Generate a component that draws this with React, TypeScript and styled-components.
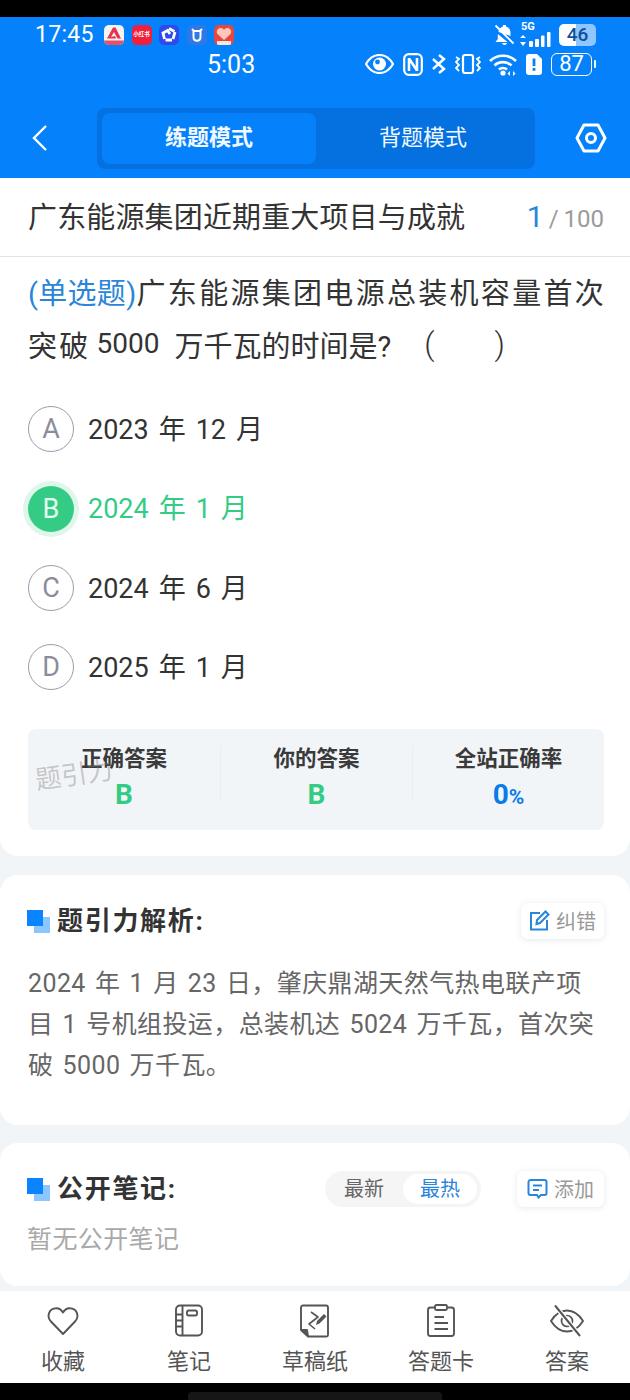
import styled, { createGlobalStyle } from 'styled-components';

const GlobalStyle = createGlobalStyle`
  * { box-sizing: border-box; }
  html, body { margin: 0; padding: 0; background: #000; }
  body { font-family: Roboto, "Noto Sans CJK SC", sans-serif; }
`;

const BLUE = '#0582fb';
const GREEN = '#34cc85';

const options = [
  { key: 'A', text: '2023 年 12 月' },
  { key: 'B', text: '2024 年 1 月', correct: true },
  { key: 'C', text: '2024 年 6 月' },
  { key: 'D', text: '2025 年 1 月' },
];

function AppIcons() {
  return (
    <AppIconRow>
      <AppIcon $bg="#f5f3f4">
        <svg width="20" height="20" viewBox="0 0 20 20">
          <path d="M3 13.5 L9 2.5 H11.5 L17 13.5 H13.5 L10 7 L7 12 L11 11 L12 13.5 Z" fill="#e8324c" />
          <rect x="0" y="15.5" width="20" height="4.5" fill="#ea4f66" />
        </svg>
      </AppIcon>
      <AppIcon $bg="#f0203c">
        <TinyText>小红书</TinyText>
      </AppIcon>
      <AppIcon $bg="#2e49ee">
        <svg width="20" height="20" viewBox="0 0 20 20" fill="none" stroke="#fff" strokeWidth="2.8">
          <path d="M10 3.5 L15.5 6.5 M16 7 L14 14 M13 15 L6.5 15 M5.5 14 L4 8 L8.5 5.5 L11 9" />
        </svg>
      </AppIcon>
      <AppIcon $bg="#2f78e6">
        <svg width="20" height="20" viewBox="0 0 20 20" fill="none" stroke="#fff" strokeWidth="2">
          <path d="M5 4 L7 6 H13 L15 4 M6.5 6 V12 C6.5 17 13.5 17 13.5 12 V6" />
        </svg>
      </AppIcon>
      <AppIcon $bg="#e8473f">
        <svg width="20" height="20" viewBox="0 0 20 20">
          <path d="M10 15 L3.5 9 C1.5 6 4 2.5 7 3 C8.5 3.2 9.5 4 10 5 C10.5 4 11.5 3.2 13 3 C16 2.5 18.5 6 16.5 9 Z" fill="#f8c9b8" />
          <rect x="3" y="16" width="14" height="4" fill="#fbe8dc" />
        </svg>
      </AppIcon>
    </AppIconRow>
  );
}

function MutedBell() {
  return (
    <svg width="21" height="22" viewBox="0 0 21 22" fill="#fff">
      <path d="M4.5 8 C4.5 5 6.5 3 9 2.4 V1 H12 V2.4 C14.5 3 16.5 5.5 16.5 9 L16.5 12 Z" />
      <path d="M3.8 10 L13.5 18 H1.5 L3.8 15 Z" />
      <path d="M8 19 H13 C12.5 21.5 8.5 21.5 8 19 Z" />
      <path d="M1.5 1.5 L19.5 19.5" stroke="#fff" strokeWidth="1.8" />
    </svg>
  );
}

function Signal() {
  return (
    <SignalWrap>
      <SignalLabel>5G</SignalLabel>
      <svg width="33" height="15" viewBox="0 0 33 15" fill="#fff">
        <path d="M3 3 L6 6 H0 Z M3 14 L0 10 H6 Z" />
        <rect x="9" y="9" width="4" height="6" rx="1" />
        <rect x="15" y="7" width="4" height="8" rx="1" />
        <rect x="21" y="3.5" width="3.5" height="11.5" rx="1" />
        <rect x="27" y="0" width="3.5" height="15" rx="1" />
      </svg>
    </SignalWrap>
  );
}

function StatusRowIcons() {
  return (
    <StatusIcons>
      <svg width="29" height="20" viewBox="0 0 29 20">
        <path d="M1 10 C5 3 10 1 14.5 1 C19 1 24 3 28 10 C24 17 19 19 14.5 19 C10 19 5 17 1 10 Z" fill="none" stroke="#fff" strokeWidth="2.2" />
        <circle cx="14.5" cy="10" r="6.5" fill="#fff" />
        <circle cx="12.5" cy="8" r="2.4" fill={BLUE} />
      </svg>
      <svg width="20" height="23" viewBox="0 0 20 23" fill="none" stroke="#fff">
        <rect x="1.2" y="1.2" width="17.6" height="20.6" rx="4.5" strokeWidth="2.2" />
        <path d="M6 5 V18 M14 5 V18 M6 5.5 L14 17.5" strokeWidth="2.6" />
      </svg>
      <svg width="15" height="22" viewBox="0 0 15 22" fill="none" stroke="#fff" strokeWidth="2.4">
        <path d="M2 6 L13 16 L8 20 M2 16 L13 6 L8 2" />
      </svg>
      <svg width="26" height="22" viewBox="0 0 26 22" fill="none" stroke="#fff" strokeWidth="2">
        <rect x="8" y="2" width="10" height="18" rx="2" strokeWidth="2.2" />
        <path d="M1 4 L4 6 L1 9 L4 12 L1 15 L4 18 M25 4 L22 6 L25 9 L22 12 L25 15 L22 18" strokeWidth="1.8" />
      </svg>
      <svg width="28" height="23" viewBox="0 0 28 23" fill="none" stroke="#fff" strokeWidth="2.6">
        <path d="M1 8 C8 1 20 1 27 8 M5.5 12.5 C10 8 18 8 22.5 12.5 M10 16.5 C12 14.5 16 14.5 18 16.5" />
        <circle cx="14" cy="20" r="2.6" fill="#fff" stroke="none" />
        <path d="M21 18 L18.5 20.5 L21 23 Z M24 18 L26.5 20.5 L24 23 Z" fill="#fff" stroke="none" />
      </svg>
      <svg width="16" height="21" viewBox="0 0 16 21">
        <path d="M3 0 H11 L16 5 V18 A3 3 0 0 1 13 21 H3 A3 3 0 0 1 0 18 V3 A3 3 0 0 1 3 0 Z" fill="#fff" />
        <rect x="6.6" y="4.5" width="2.8" height="7.5" fill={BLUE} />
        <rect x="6.6" y="14" width="2.8" height="2.8" fill={BLUE} />
      </svg>
      <BatteryOutline>
        <BatteryBox>87</BatteryBox>
        <BatteryTip />
      </BatteryOutline>
    </StatusIcons>
  );
}

function BackIcon() {
  return (
    <svg width="18" height="28" viewBox="0 0 18 28" fill="none" stroke="#fff" strokeWidth="2.4">
      <path d="M15 2 L3 14 L15 26" />
    </svg>
  );
}

function SettingsIcon() {
  return (
    <svg width="32" height="30" viewBox="0 0 32 30" fill="none" stroke="#fff" strokeWidth="3" strokeLinejoin="round">
      <path d="M9 2 H23 L30 15 L23 28 H9 L2 15 Z" />
      <circle cx="16" cy="15" r="4.5" />
    </svg>
  );
}

function EditIcon() {
  return (
    <svg width="21" height="21" viewBox="0 0 21 21" fill="none" stroke="#2a86d9" strokeWidth="2">
      <path d="M11 3 H2 V19.5 H18 V10" />
      <path d="M7.5 14 L8 10 L16.5 1.5 L19.5 4.5 L11 13 Z" />
    </svg>
  );
}

function CommentIcon() {
  return (
    <svg width="21" height="21" viewBox="0 0 21 21" fill="none" stroke="#2a86d9" strokeWidth="2">
      <path d="M3.5 2 H17.5 A2 2 0 0 1 19.5 4 V15 A2 2 0 0 1 17.5 17 H14 L11.5 19.5 L10 17 H3.5 A2 2 0 0 1 1.5 15 V4 A2 2 0 0 1 3.5 2 Z" />
      <path d="M6 7.5 H15 M6 12 H12" />
    </svg>
  );
}

function HeartIcon() {
  return (
    <svg width="34" height="34" viewBox="0 0 34 34" fill="none" stroke="#555" strokeWidth="1.9" strokeLinejoin="round">
      <path d="M17 30 L4.5 17 C0.5 12 3 4.5 10 4.2 C13 4 15.5 5.8 17 8.5 C18.5 5.8 21 4 24 4.2 C31 4.5 33.5 12 29.5 17 Z" />
    </svg>
  );
}

function NotebookIcon() {
  return (
    <svg width="34" height="34" viewBox="0 0 34 34" fill="none" stroke="#555" strokeWidth="1.9">
      <rect x="4" y="1.5" width="26" height="30" rx="4" />
      <path d="M10.5 1.5 V31.5 M4 10.5 H10.5 M4 16.5 H10.5 M4 22.5 H10.5" />
      <rect x="15" y="6.5" width="10" height="5" rx="1.8" />
    </svg>
  );
}

function DraftIcon() {
  return (
    <svg width="34" height="34" viewBox="0 0 34 34" fill="none" stroke="#555" strokeWidth="1.9" strokeLinejoin="round">
      <path d="M5 1.5 H28 A2 2 0 0 1 30 3.5 V31 A1.5 1.5 0 0 1 28.5 32.5 H10 L3 26 V3.5 A2 2 0 0 1 5 1.5 Z" />
      <path d="M3 26 H9 L10 32" fill="#555" />
      <path d="M13 8 L20 13 L11 20 L17 25" strokeWidth="1.6" />
      <path d="M18 21 L19 17 L26 10 L28.5 12.5 L21.5 19.5 Z" fill="#555" stroke="none" />
    </svg>
  );
}

function ClipboardIcon() {
  return (
    <svg width="34" height="34" viewBox="0 0 34 34" fill="none" stroke="#555" strokeWidth="1.9">
      <path d="M10.5 3.5 H6.5 A2.5 2.5 0 0 0 4 6 V29.5 A2.5 2.5 0 0 0 6.5 32 H27.5 A2.5 2.5 0 0 0 30 29.5 V6 A2.5 2.5 0 0 0 27.5 3.5 H24" />
      <rect x="11" y="1" width="12" height="5" rx="1.5" />
      <path d="M10.5 13 H20 M10.5 19 H24 M10.5 25 H24" />
    </svg>
  );
}

function EyeOffIcon() {
  return (
    <svg width="36" height="34" viewBox="0 0 36 34" fill="none" stroke="#555" strokeWidth="1.9">
      <path d="M2 17 C7 9 12 6.5 18 6.5 C24 6.5 29 9 34 17 C29 25 24 27.5 18 27.5 C12 27.5 7 25 2 17 Z" />
      <circle cx="18" cy="17" r="5.5" strokeWidth="1.7" />
      <path d="M6 1.5 L31 32" stroke="#fff" strokeWidth="4.5" />
      <path d="M6 1.5 L31 32" strokeWidth="2" />
    </svg>
  );
}

function SectionMark() {
  return (
    <Mark>
      <MarkBack />
      <MarkFront />
    </Mark>
  );
}

export default function App() {
  return (
    <Screen>
      <GlobalStyle />
      <TopBlack />
      <Header>
        <StatusTop>
          <ClockLarge>17:45</ClockLarge>
          <AppIcons />
          <TopRight>
            <MutedBell />
            <Signal />
            <BatteryFilled>46</BatteryFilled>
          </TopRight>
        </StatusTop>
        <StatusSecond>
          <ClockSecond>5:03</ClockSecond>
          <StatusRowIcons />
        </StatusSecond>
        <NavRow>
          <NavIconSlot><BackIcon /></NavIconSlot>
          <Segment>
            <SegmentTab $active>练题模式</SegmentTab>
            <SegmentTab>背题模式</SegmentTab>
          </Segment>
          <NavIconSlot><SettingsIcon /></NavIconSlot>
        </NavRow>
      </Header>

      <Content>
        <QuestionCard>
          <TitleRow>
            <ChapterTitle>广东能源集团近期重大项目与成就</ChapterTitle>
            <Counter><b>1</b><i>/</i>100</Counter>
          </TitleRow>
          <QuestionBody>
            <QuestionLine>
              <QuestionType>(单选题)</QuestionType>
              <span>广东能源集团电源总装机容量首次</span>
            </QuestionLine>
            <QuestionLine>
              <span>突破</span>
              <Num>5000</Num>
              <TightText>万千瓦的时间是?</TightText>
              <Paren $first>(</Paren>
              <Paren>)</Paren>
            </QuestionLine>
            <OptionList>
              {options.map((o) => (
                <Option key={o.key}>
                  <OptionBadge $correct={o.correct}>{o.key}</OptionBadge>
                  <OptionText $correct={o.correct}>{o.text}</OptionText>
                </Option>
              ))}
            </OptionList>
            <Stats>
              <StatCell>
                <StatLabel>正确答案</StatLabel>
                <StatValue $green>B</StatValue>
              </StatCell>
              <StatCell>
                <StatLabel>你的答案</StatLabel>
                <StatValue $green>B</StatValue>
              </StatCell>
              <StatCell>
                <StatLabel>全站正确率</StatLabel>
                <StatValue>0<small>%</small></StatValue>
              </StatCell>
              <Watermark>题引力</Watermark>
            </Stats>
          </QuestionBody>
        </QuestionCard>

        <AnalysisCard>
          <SectionHead>
            <SectionMark />
            <SectionTitle>题引力解析:</SectionTitle>
            <SmallAction>
              <EditIcon />
              <span>纠错</span>
            </SmallAction>
          </SectionHead>
          <Analysis>
            2024 年 1 月 23 日，肇庆鼎湖天然气热电联产项<br />
            目 1 号机组投运，总装机达 5024 万千瓦，首次突<br />
            破 5000 万千瓦。
          </Analysis>
        </AnalysisCard>

        <NotesCard>
          <SectionHead>
            <SectionMark />
            <SectionTitle>公开笔记:</SectionTitle>
            <SortSwitch>
              <SortItem>最新</SortItem>
              <SortItem $active>最热</SortItem>
            </SortSwitch>
            <AddAction>
              <CommentIcon />
              <span>添加</span>
            </AddAction>
          </SectionHead>
          <EmptyNotes>暂无公开笔记</EmptyNotes>
        </NotesCard>
      </Content>

      <TabBar>
        <TabItem><HeartIcon /><TabLabel>收藏</TabLabel></TabItem>
        <TabItem><NotebookIcon /><TabLabel>笔记</TabLabel></TabItem>
        <TabItem><DraftIcon /><TabLabel>草稿纸</TabLabel></TabItem>
        <TabItem><ClipboardIcon /><TabLabel>答题卡</TabLabel></TabItem>
        <TabItem><EyeOffIcon /><TabLabel>答案</TabLabel></TabItem>
      </TabBar>
      <BottomBlack>
        <HomeBar />
      </BottomBlack>
    </Screen>
  );
}

const Screen = styled.div`
  width: 630px;
  height: 1400px;
  overflow: hidden;
  display: flex;
  flex-direction: column;
  background: #f2f5f8;
`;

const TopBlack = styled.div`
  height: 17px;
  background: #000;
`;

const Header = styled.header`
  height: 162px;
  background: ${BLUE};
  color: #fff;
`;

const StatusTop = styled.div`
  height: 33px;
  padding: 3px 34px 0 35px;
  display: flex;
  align-items: center;
`;

const ClockLarge = styled.span`
  font-size: 23px;
  width: 69px;
  letter-spacing: 0.3px;
`;

const AppIconRow = styled.div`
  display: flex;
  gap: 7.5px;
`;

const AppIcon = styled.div<{ $bg: string }>`
  width: 20px;
  height: 20px;
  border-radius: 5px;
  overflow: hidden;
  background: ${(p) => p.$bg};
  display: flex;
  align-items: center;
  justify-content: center;
`;

const TinyText = styled.span`
  font-size: 5.5px;
  line-height: 1;
  white-space: nowrap;
  color: #fff;
  font-weight: 700;
`;

const TopRight = styled.div`
  margin-left: auto;
  display: flex;
  align-items: center;
  gap: 5px;
`;

const SignalWrap = styled.div`
  width: 33px;
  display: flex;
  flex-direction: column;
  align-items: flex-start;
`;

const SignalLabel = styled.span`
  font-size: 11px;
  line-height: 10px;
  font-weight: 700;
  margin-left: 1px;
`;

const BatteryFilled = styled.div`
  width: 37px;
  height: 22px;
  margin-left: 1px;
  border-radius: 5px;
  background: linear-gradient(90deg, #fff 46%, #8fc6fd 46%);
  text-align: center;
  font-size: 19px;
  line-height: 22px;
  font-weight: 500;
  color: #0c4f9c;
`;

const StatusSecond = styled.div`
  height: 29px;
  padding: 0 34px 0 207px;
  display: flex;
  align-items: center;
`;

const ClockSecond = styled.span`
  font-size: 25px;
`;

const StatusIcons = styled.div`
  margin-left: auto;
  display: flex;
  align-items: center;
  gap: 8.5px;
`;

const BatteryOutline = styled.div`
  display: flex;
  align-items: center;
  gap: 2px;
  margin-left: 1px;
`;

const BatteryBox = styled.div`
  width: 41px;
  height: 23px;
  border: 1.5px solid #fff;
  border-radius: 6px;
  font-size: 22px;
  line-height: 20px;
  text-align: center;
`;

const BatteryTip = styled.div`
  width: 2px;
  height: 8px;
  border-radius: 1px;
  background: #fff;
`;

const NavRow = styled.div`
  margin-top: 29px;
  display: flex;
  align-items: center;
`;

const NavIconSlot = styled.div`
  flex: 1;
  display: flex;
  justify-content: center;
  &:first-child {
    padding-right: 18px;
  }
  &:last-child {
    padding-left: 16px;
  }
`;

const Segment = styled.div`
  width: 438px;
  height: 61px;
  padding: 5px;
  border-radius: 8px;
  background: #0571e0;
  display: flex;
`;

const SegmentTab = styled.div<{ $active?: boolean }>`
  width: 214px;
  border-radius: 8px;
  background: ${(p) => (p.$active ? BLUE : 'transparent')};
  text-align: center;
  font-size: 22px;
  line-height: 49px;
  height: 51px;
  font-weight: ${(p) => (p.$active ? 700 : 400)};
  color: #f1f8ff;
`;

const Content = styled.main`
  height: 1112px;
  display: flex;
  flex-direction: column;
`;

const QuestionCard = styled.section`
  height: 678px;
  background: #fff;
  border-radius: 0 0 18px 18px;
`;

const TitleRow = styled.div`
  height: 79px;
  padding: 0 26px 4px 28px;
  border-bottom: 1px solid #e4e4e4;
  display: flex;
  align-items: center;
  justify-content: space-between;
`;

const ChapterTitle = styled.h1`
  margin: 0;
  font-size: 29px;
  letter-spacing: 0.15px;
  font-weight: 400;
  color: #333;
`;

const Counter = styled.div`
  font-size: 24px;
  color: #9b9b9b;
  margin-top: 2px;
  b {
    font-size: 30px;
    font-weight: 400;
    color: #2a86d9;
  }
  i {
    font-style: normal;
    margin: 0 5px;
  }
`;

const QuestionBody = styled.div`
  padding: 7px 26px 0 28px;
`;

const QuestionLine = styled.div`
  height: 53px;
  display: flex;
  align-items: center;
  white-space: nowrap;
  font-size: 29px;
  letter-spacing: 2.3px;
  color: #333;
`;

const QuestionType = styled.span`
  width: 111px;
  color: #2a86d9;
  letter-spacing: 0.3px;
`;

const Num = styled.span`
  margin: 0 15px 0 6px;
  letter-spacing: 0;
  font-size: 28px;
`;

const TightText = styled.span`
  letter-spacing: 0;
`;

const Paren = styled.span<{ $first?: boolean }>`
  margin-left: ${(p) => (p.$first ? '33px' : '60px')};
  font-size: 32px;
  font-weight: 300;
  letter-spacing: 0;
`;

const OptionList = styled.div`
  margin-top: 36px;
  display: flex;
  flex-direction: column;
  gap: 33.3px;
`;

const Option = styled.div`
  height: 46px;
  display: flex;
  align-items: center;
  gap: 14px;
`;

const OptionBadge = styled.div<{ $correct?: boolean }>`
  width: 46px;
  height: 46px;
  border-radius: 50%;
  border: ${(p) => (p.$correct ? 'none' : '1.5px solid #9a9cab')};
  background: ${(p) => (p.$correct ? GREEN : '#fff')};
  box-shadow: ${(p) => (p.$correct ? '0 0 0 5px #dff6ea' : 'none')};
  color: ${(p) => (p.$correct ? '#e6fff2' : '#8b8d9b')};
  display: flex;
  align-items: center;
  justify-content: center;
  font-size: 27px;
`;

const OptionText = styled.span<{ $correct?: boolean }>`
  margin-bottom: 4px;
  font-size: 27px;
  word-spacing: 3.3px;
  color: ${(p) => (p.$correct ? GREEN : '#333')};
`;

const Stats = styled.div`
  position: relative;
  margin: 39px 0 0;
  height: 101px;
  padding: 17px 0 0;
  border-radius: 8px;
  background: #f2f5f8;
  display: grid;
  grid-template-columns: repeat(3, 1fr);
`;

const StatCell = styled.div`
  display: flex;
  flex-direction: column;
  align-items: center;
  height: 55px;
  & + & {
    border-left: 1px solid #ebeef1;
  }
`;

const StatLabel = styled.div`
  font-size: 21.5px;
  line-height: 26px;
  font-weight: 700;
  color: #3a3a3a;
`;

const StatValue = styled.div<{ $green?: boolean }>`
  margin-top: 9px;
  font-size: 28px;
  line-height: 28px;
  font-weight: 700;
  color: ${(p) => (p.$green ? GREEN : '#0a7ce8')};
  small {
    font-size: 21px;
  }
`;

const Watermark = styled.div`
  position: absolute;
  left: 7px;
  top: 31px;
  font-size: 26px;
  line-height: 30px;
  color: rgba(120, 120, 120, 0.38);
  transform: rotate(-8deg);
`;

const AnalysisCard = styled.section`
  margin-top: 19px;
  height: 250px;
  padding: 28px 26px 0 27px;
  background: #fff;
  border-radius: 18px;
`;

const NotesCard = styled(AnalysisCard)`
  margin-top: 18px;
  height: 143px;
`;

const SectionHead = styled.div`
  height: 36px;
  display: flex;
  align-items: center;
`;

const Mark = styled.div`
  position: relative;
  width: 23px;
  height: 23px;
  margin-right: 7px;
  flex: none;
`;

const MarkBack = styled.div`
  position: absolute;
  right: 0;
  bottom: 0;
  width: 16px;
  height: 16px;
  background: #8cc6ff;
`;

const MarkFront = styled.div`
  position: absolute;
  left: 0;
  top: 0;
  width: 16px;
  height: 16px;
  background: #0a84ff;
`;

const SectionTitle = styled.h2`
  margin: 0 0 5px;
  font-size: 26px;
  letter-spacing: 1.7px;
  font-weight: 700;
  color: #333;
`;

const SmallAction = styled.div`
  margin-left: auto;
  width: 83px;
  height: 36px;
  border-radius: 7px;
  background: #fff;
  box-shadow: 0 1px 6px rgba(60, 80, 110, 0.13);
  display: flex;
  align-items: center;
  justify-content: center;
  gap: 6px;
  padding-bottom: 1px;
  font-size: 20px;
  color: #999;
`;

const AddAction = styled(SmallAction)`
  margin-left: 36px;
  width: 87px;
`;

const SortSwitch = styled.div`
  margin-left: auto;
  width: 156px;
  height: 36px;
  padding: 3px 4px 3px 0;
  border-radius: 18px;
  background: #f5f5f5;
  display: flex;
`;

const SortItem = styled.div<{ $active?: boolean }>`
  flex: ${(p) => (p.$active ? '0 0 74px' : '1')};
  border-radius: 15px;
  background: ${(p) => (p.$active ? '#fff' : 'transparent')};
  color: ${(p) => (p.$active ? '#2a86d9' : '#666')};
  text-align: center;
  font-size: 20px;
  line-height: 30px;
`;

const Analysis = styled.p`
  margin: 24px 0 0 1px;
  font-size: 25px;
  line-height: 41px;
  letter-spacing: 0.4px;
  word-spacing: 2.6px;
  white-space: nowrap;
  color: #666;
`;

const EmptyNotes = styled.div`
  margin: 17px 0 0;
  font-size: 25px;
  letter-spacing: 0.4px;
  line-height: 32px;
  color: #a9a9a9;
`;

const TabBar = styled.nav`
  margin-top: 4px;
  height: 92px;
  background: #fff;
  display: grid;
  grid-template-columns: repeat(5, 1fr);
`;

const TabItem = styled.div`
  padding-top: 13px;
  display: flex;
  flex-direction: column;
  align-items: center;
`;

const TabLabel = styled.span`
  margin-top: 10px;
  font-size: 22px;
  line-height: 28px;
  color: #555;
`;

const BottomBlack = styled.div`
  height: 17px;
  background: #000;
  display: flex;
  justify-content: center;
  align-items: flex-end;
`;

const HomeBar = styled.div`
  width: 254px;
  height: 8px;
  border-radius: 4px 4px 0 0;
  background: #161616;
`;
